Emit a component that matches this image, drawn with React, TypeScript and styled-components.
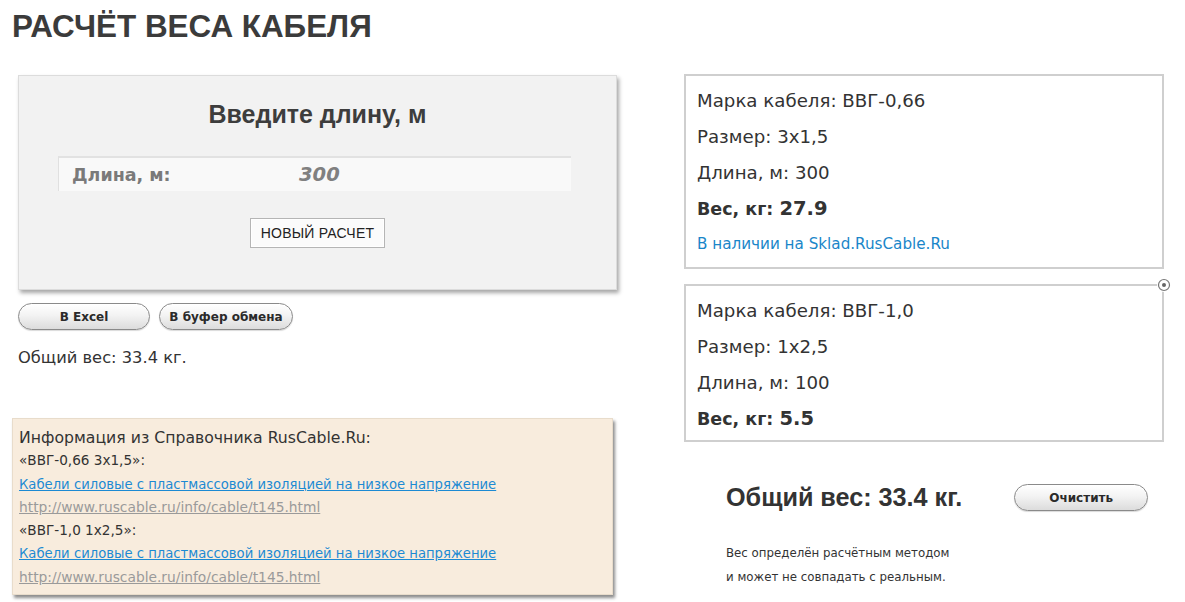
import React from "react";
import styled, { createGlobalStyle } from "styled-components";

const Global = createGlobalStyle`
  html, body { margin: 0; padding: 0; background: #fff; }
  body { font-family: "DejaVu Sans", Verdana, sans-serif; color: #333; }
  * { box-sizing: border-box; }
`;

const Page = styled.div`
  display: flex;
  align-items: flex-start;
  gap: 67px;
  padding: 0 0 0 12px;
  width: 1185px;
  height: 602px;
  overflow: hidden;
`;

const LeftCol = styled.div`
  width: 605px;
  display: flex;
  flex-direction: column;
`;

const RightCol = styled.div`
  width: 480px;
  display: flex;
  flex-direction: column;
  padding-top: 74px;
`;

const Title = styled.h1`
  margin: 10px 0 0 0;
  font-family: "Liberation Sans", Arial, sans-serif;
  font-weight: bold;
  font-size: 31.4px;
  line-height: 34px;
  color: #3b3b3b;
`;

const CalcBox = styled.div`
  margin: 31px 0 0 6px;
  width: 599px;
  height: 215px;
  background: #f2f2f2;
  border: 1px solid #dcdcdc;
  box-shadow: 2px 3px 4px rgba(0, 0, 0, 0.35);
  display: flex;
  flex-direction: column;
  align-items: center;
`;

const CalcHeading = styled.div`
  margin-top: 23px;
  font-family: "Liberation Sans", Arial, sans-serif;
  font-weight: bold;
  font-size: 25px;
  line-height: 30px;
  color: #3d3d3d;
`;

const InputRow = styled.div`
  margin-top: 27px;
  align-self: flex-start;
  margin-left: 39px;
  width: 513px;
  height: 35px;
  background: #f9f9f9;
  border-top: 2px solid #e2e2e2;
  border-left: 1px solid #e0e0e0;
  display: flex;
  align-items: center;
  padding-left: 13px;
`;

const InputLabel = styled.span`
  width: 227px;
  font-weight: bold;
  font-size: 17.5px;
  color: #7a7a7a;
`;

const InputValue = styled.span`
  font-weight: bold;
  font-style: italic;
  font-size: 19.5px;
  color: #808080;
`;

const SquareButton = styled.button`
  margin-top: 27px;
  height: 30px;
  padding: 0 10px;
  background: #fbfbfb;
  border: 1px solid #b5b5b5;
  box-shadow: inset 0 0 0 1px #fff;
  font-family: "Liberation Sans", Arial, sans-serif;
  font-size: 14px;
  color: #222;
  letter-spacing: 0.2px;
`;

const PillRow = styled.div`
  margin: 13px 0 0 6px;
  display: flex;
  gap: 9px;
`;

const PillButton = styled.button<{ $w: number }>`
  width: ${(p) => p.$w}px;
  height: 27px;
  border-radius: 14px;
  border: 1px solid #8a8a8a;
  background: linear-gradient(#ffffff 0%, #f3f3f3 45%, #dcdcdc 100%);
  box-shadow: inset 0 1px 0 #fff, 0 1px 1px rgba(0, 0, 0, 0.15);
  font-family: "DejaVu Sans", Verdana, sans-serif;
  font-size: 12px;
  font-weight: bold;
  color: #2a2a2a;
  padding: 0;
`;

const SmallTotal = styled.div`
  margin: 16px 0 0 6px;
  font-size: 16.3px;
  line-height: 24px;
  color: #333;
`;

const InfoBox = styled.div`
  margin-top: 48px;
  width: 601px;
  height: 177px;
  background: #f8ecdd;
  border: 1px solid #e8dccb;
  box-shadow: 2px 3px 3px rgba(0, 0, 0, 0.45);
  padding: 7px 0 0 6px;
  font-size: 13.6px;
  line-height: 23.3px;
  color: #333;
`;

const InfoTitle = styled.div`
  font-size: 15.7px;
`;

const InfoLine = styled.div``;

const InfoLink = styled.a<{ $muted?: boolean }>`
  display: block;
  color: ${(p) => (p.$muted ? "#9a9a9a" : "#1c8ad3")};
  text-decoration: underline;
  font-size: ${(p) => (p.$muted ? "13.8px" : "13.2px")};
`;

const Card = styled.div<{ $h: number }>`
  position: relative;
  width: 480px;
  height: ${(p) => p.$h}px;
  border: 2px solid #cfcfcf;
  padding: 7px 0 0 11px;
  font-size: 18.2px;
  line-height: 36px;
  color: #333;
  & + & {
    margin-top: 15px;
  }
`;

const CardLine = styled.div<{ $bold?: boolean }>`
  font-weight: ${(p) => (p.$bold ? "bold" : "normal")};
  font-size: ${(p) => (p.$bold ? "17.5px" : "inherit")};
`;

const BoldNum = styled.span`
  font-size: 19.5px;
`;

const CardLink = styled.a`
  display: block;
  font-size: 15.2px;
  line-height: 34px;
  color: #1a86c9;
  text-decoration: none;
`;

const CloseIcon = styled.span`
  position: absolute;
  top: -8px;
  right: -9px;
  width: 14px;
  height: 14px;
  background: #fff;
  border-radius: 50%;
  display: flex;
`;

const TotalRow = styled.div`
  margin: 41px 0 0 42px;
  display: flex;
  align-items: center;
  gap: 52px;
`;

const BigTotal = styled.div`
  font-family: "Liberation Sans", Arial, sans-serif;
  font-weight: bold;
  font-size: 25.2px;
  color: #333;
`;

const Note = styled.div`
  margin: 29px 0 0 42px;
  font-size: 11.8px;
  line-height: 24px;
  color: #333;
`;

export default function App() {
  return (
    <>
      <Global />
      <Page>
        <LeftCol>
          <Title>РАСЧЁТ ВЕСА КАБЕЛЯ</Title>
          <CalcBox>
            <CalcHeading>Введите длину, м</CalcHeading>
            <InputRow>
              <InputLabel>Длина, м:</InputLabel>
              <InputValue>300</InputValue>
            </InputRow>
            <SquareButton>НОВЫЙ РАСЧЕТ</SquareButton>
          </CalcBox>
          <PillRow>
            <PillButton $w={132}>В Excel</PillButton>
            <PillButton $w={134}>В буфер обмена</PillButton>
          </PillRow>
          <SmallTotal>Общий вес: 33.4 кг.</SmallTotal>
          <InfoBox>
            <InfoTitle>Информация из Справочника RusCable.Ru:</InfoTitle>
            <InfoLine>«ВВГ-0,66 3х1,5»:</InfoLine>
            <InfoLink href="#">Кабели силовые с пластмассовой изоляцией на низкое напряжение</InfoLink>
            <InfoLink href="#" $muted>http://www.ruscable.ru/info/cable/t145.html</InfoLink>
            <InfoLine>«ВВГ-1,0 1х2,5»:</InfoLine>
            <InfoLink href="#">Кабели силовые с пластмассовой изоляцией на низкое напряжение</InfoLink>
            <InfoLink href="#" $muted>http://www.ruscable.ru/info/cable/t145.html</InfoLink>
          </InfoBox>
        </LeftCol>
        <RightCol>
          <Card $h={195}>
            <CardLine>Марка кабеля: ВВГ-0,66</CardLine>
            <CardLine>Размер: 3х1,5</CardLine>
            <CardLine>Длина, м: 300</CardLine>
            <CardLine $bold>
              Вес, кг: <BoldNum>27.9</BoldNum>
            </CardLine>
            <CardLink href="#">В наличии на Sklad.RusCable.Ru</CardLink>
          </Card>
          <Card $h={158}>
            <CloseIcon>
              <svg width="14" height="14" viewBox="0 0 14 14">
                <circle cx="7" cy="7" r="5.5" fill="#fff" stroke="#777" strokeWidth="1.2" />
                <circle cx="7" cy="7" r="2" fill="#666" />
              </svg>
            </CloseIcon>
            <CardLine>Марка кабеля: ВВГ-1,0</CardLine>
            <CardLine>Размер: 1х2,5</CardLine>
            <CardLine>Длина, м: 100</CardLine>
            <CardLine $bold>
              Вес, кг: <BoldNum>5.5</BoldNum>
            </CardLine>
          </Card>
          <TotalRow>
            <BigTotal>Общий вес: 33.4 кг.</BigTotal>
            <PillButton $w={134}>Очистить</PillButton>
          </TotalRow>
          <Note>
            Вес определён расчётным методом
            <br />и может не совпадать с реальным.
          </Note>
        </RightCol>
      </Page>
    </>
  );
}
